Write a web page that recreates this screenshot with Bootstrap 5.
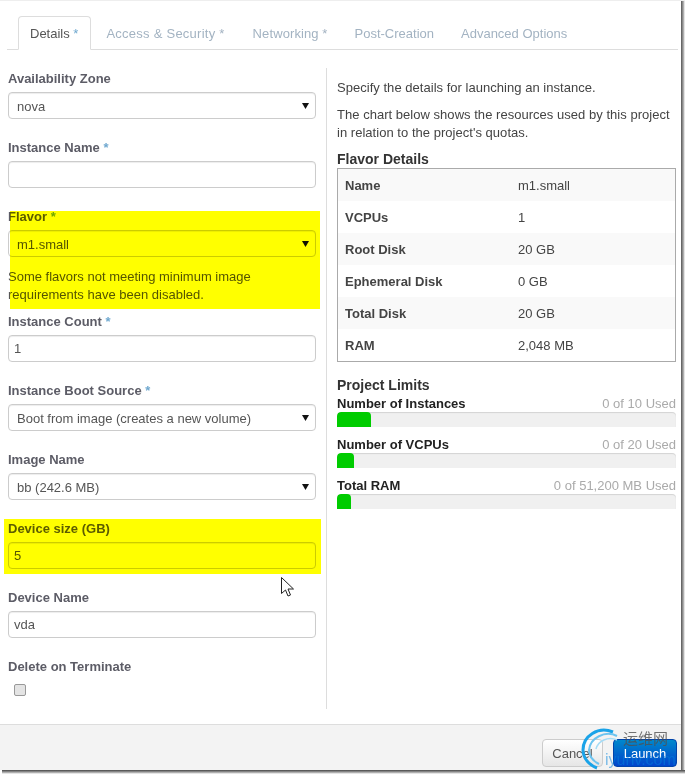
<!DOCTYPE html>
<html lang="en">
<head>
<meta charset="utf-8">
<title>Launch Instance</title>
<link href="https://cdn.jsdelivr.net/npm/bootstrap@5.3.0/dist/css/bootstrap.min.css" rel="stylesheet">
<style>
html,body{margin:0;height:774px;overflow:hidden;background:#fff}
body{font-family:"Liberation Sans",Arial,sans-serif;font-size:13px;color:#444;line-height:18px}
.shot{position:relative;width:685px;height:774px;overflow:hidden;border-top:1px solid #eee}
.dlg{width:681px;height:769px;display:flex;flex-direction:column;background:#fff}
.tabs-wrap{padding:15px 3px 0 7px}
.tabs-wrap .nav-tabs{border-bottom:1px solid #ddd;padding-left:11px;height:34px;flex-wrap:nowrap;--bs-nav-tabs-border-color:#ddd}
.tabs-wrap .nav-link{padding:7px 12px 0 11px;margin:0 2px 0 0;height:34px;font-size:13px;line-height:20px;color:#a3b3c2;border:1px solid transparent;border-radius:4px 4px 0 0;white-space:nowrap}
.tabs-wrap .nav-link.active{color:#555;background:#fff;border-color:#ddd #ddd #fff;margin-right:3px}
.tabs-wrap .tab-wide{letter-spacing:.25px;margin-right:3px}
.tab-mid{letter-spacing:.1px}
.ast{color:#6fa8cf}
.panes{display:flex;flex:1 1 auto;min-height:0;padding-top:18px}
.lhs{width:327px;flex:none;padding:1px 10px 0 8px;border-right:1px solid #ddd;height:641px}
.rhs{flex:1 1 auto;padding:11px 5px 0 10px;min-width:0}
.fld{height:69px;padding-top:1px}
.fld-lbl{display:block;margin:0;height:18px;line-height:18px;font-size:13px;font-weight:700;color:#5c5c66}
.fld .form-select,.fld .form-control{height:27px;margin-top:4px;font-size:13px;line-height:18px;color:#555;border:1px solid #ccc;border-radius:4px;padding:3px 8px;box-shadow:inset 0 1px 1px rgba(0,0,0,.075);font-family:inherit}
.fld .form-control{padding-left:5px}
.fld .form-select{padding-top:4px;padding-bottom:2px;background-image:url("data:image/svg+xml,%3Csvg xmlns='http://www.w3.org/2000/svg' width='7' height='6'%3E%3Cpath d='M0 0h7L3.500 6z' fill='%23111'/%3E%3C/svg%3E");background-size:7px 6px;background-position:right 6px center}
.flavor-fld{height:105px}
.hint{margin:11px 0 0;font-size:13px;line-height:18px;color:#555}
.fld .form-check-input{display:block;width:12px;height:12px;margin:8px 0 0 6px;float:none;background:#e4e4e4;border:1px solid #999;border-radius:2px}
.rhs p{margin:0 0 9px;line-height:18px;color:#444;letter-spacing:.03px}
.sect{font-size:14px;font-weight:700;line-height:16px;color:#333;margin:0}
.flv{margin:1px 0 0;width:339px;border:1px solid #aaa;border-collapse:separate;border-spacing:0;table-layout:fixed}
.flv td,.flv th{height:32px;padding:2px 0 0 7px;font-size:13px;color:#444;border:0;background:#fff;vertical-align:middle;line-height:18px}
.flv th{width:173px;font-weight:700}
.flv tr:nth-child(odd) td,.flv tr:nth-child(odd) th{background:#f9f9f9}
.sect.lim-h{margin:15px 0 2px}
.lim{height:41px}
.lim-top{display:flex;justify-content:space-between;height:17px;line-height:17px}
.lim-top b{color:#222;font-weight:700}
.lim-top span{color:#aaa}
.lim .progress{height:15px;width:339px;border-radius:4px 4px 0 0;background:#f0f0f0;box-shadow:inset 0 1px 1px rgba(0,0,0,.12)}
.lim .progress-bar{background:#00cc00;border-radius:4px 4px 0 0}
.foot{height:46px;flex:none;background:#f3f3f3;border-top:1px solid #ddd;margin-top:15px;display:flex;justify-content:flex-end;align-items:flex-start;gap:10px;padding:14px 4px 0 0}
.foot .btn{height:28px;font-size:13px;line-height:18px;padding:4px 0 2px;border-radius:4px}
.btn-cxl{width:61px;background:linear-gradient(#fff,#e6e6e6);border:1px solid #ccc;color:#555}
.btn-go{width:64px;background:linear-gradient(#0088cc,#0044cc);border:1px solid #0044aa;color:#fff}
.edge-r{position:absolute;left:681px;top:0;width:4px;height:774px;background:linear-gradient(90deg,#555,#aaa 60%,#fff)}
.edge-b{position:absolute;left:2px;top:769px;width:683px;height:4px;background:linear-gradient(#444,#aaa 60%,#fff)}
.hl{position:absolute;background:#ff0;mix-blend-mode:multiply}
.hl-a{left:10px;top:210px;width:310px;height:98px}
.hl-b{left:4px;top:518px;width:317px;height:55px}
.ptr{position:absolute;left:281px;top:576px;width:13px;height:21px}
.wm{position:absolute;left:581px;top:726px;width:99px;height:44px;pointer-events:none}
.wm-cn{position:absolute;left:42px;top:2px;font:400 15px/18px "Noto Sans CJK SC",sans-serif;color:rgba(80,80,80,.8)}
.wm-en{position:absolute;left:24px;top:24px;font:400 16px/18px "Liberation Sans",sans-serif;color:rgba(0,130,220,.5)}
.wm svg{position:absolute;left:0;top:0}
</style>
</head>
<body>
<div class="shot">
  <div class="dlg">
    <div class="tabs-wrap">
      <ul class="nav nav-tabs">
        <li class="nav-item"><a class="nav-link active" href="#">Details <span class="ast">*</span></a></li>
        <li class="nav-item"><a class="nav-link tab-wide" href="#">Access &amp; Security *</a></li>
        <li class="nav-item"><a class="nav-link tab-mid" href="#">Networking *</a></li>
        <li class="nav-item"><a class="nav-link" href="#">Post-Creation</a></li>
        <li class="nav-item"><a class="nav-link" href="#">Advanced Options</a></li>
      </ul>
    </div>
    <div class="panes">
      <div class="lhs">
        <div class="fld"><label class="fld-lbl">Availability Zone</label>
          <select class="form-select"><option>nova</option></select></div>
        <div class="fld"><label class="fld-lbl">Instance Name <span class="ast">*</span></label>
          <input class="form-control" type="text"></div>
        <div class="fld flavor-fld"><label class="fld-lbl">Flavor <span class="ast">*</span></label>
          <select class="form-select"><option>m1.small</option></select>
          <p class="hint">Some flavors not meeting minimum image requirements have been disabled.</p></div>
        <div class="fld"><label class="fld-lbl">Instance Count <span class="ast">*</span></label>
          <input class="form-control" type="text" value="1"></div>
        <div class="fld"><label class="fld-lbl">Instance Boot Source <span class="ast">*</span></label>
          <select class="form-select"><option>Boot from image (creates a new volume)</option></select></div>
        <div class="fld"><label class="fld-lbl">Image Name</label>
          <select class="form-select"><option>bb (242.6 MB)</option></select></div>
        <div class="fld"><label class="fld-lbl">Device size (GB)</label>
          <input class="form-control" type="text" value="5"></div>
        <div class="fld"><label class="fld-lbl">Device Name</label>
          <input class="form-control" type="text" value="vda"></div>
        <div class="fld"><label class="fld-lbl">Delete on Terminate</label>
          <input class="form-check-input" type="checkbox"></div>
      </div>
      <div class="rhs">
        <p>Specify the details for launching an instance.</p>
        <p>The chart below shows the resources used by this project in relation to the project's quotas.</p>
        <h6 class="sect">Flavor Details</h6>
        <table class="flv">
          <tr><th>Name</th><td>m1.small</td></tr>
          <tr><th>VCPUs</th><td>1</td></tr>
          <tr><th>Root Disk</th><td>20 GB</td></tr>
          <tr><th>Ephemeral Disk</th><td>0 GB</td></tr>
          <tr><th>Total Disk</th><td>20 GB</td></tr>
          <tr><th>RAM</th><td>2,048 MB</td></tr>
        </table>
        <h6 class="sect lim-h">Project Limits</h6>
        <div class="lim"><div class="lim-top"><b>Number of Instances</b><span>0 of 10 Used</span></div>
          <div class="progress"><div class="progress-bar" style="width:10%"></div></div></div>
        <div class="lim"><div class="lim-top"><b>Number of VCPUs</b><span>0 of 20 Used</span></div>
          <div class="progress"><div class="progress-bar" style="width:5%"></div></div></div>
        <div class="lim"><div class="lim-top"><b>Total RAM</b><span>0 of 51,200 MB Used</span></div>
          <div class="progress"><div class="progress-bar" style="width:4%"></div></div></div>
      </div>
    </div>
    <div class="foot">
      <button class="btn btn-cxl" type="button">Cancel</button>
      <button class="btn btn-go" type="button">Launch</button>
    </div>
  </div>
  <div class="hl hl-a"></div>
  <div class="hl hl-b"></div>
  <svg class="ptr" viewBox="0 0 13 21"><path d="M.5.5v16l4-3.500 2.500 6 2.500-1-2.500-6h5.500z" fill="#fff" stroke="#222" stroke-width="1"/></svg>
  <div class="wm">
    <svg width="42" height="44" viewBox="0 0 42 44"><path d="M32 5C17-1 2 9 2 23c0 8 6 15 14 18" fill="none" stroke="#1aa3e8" stroke-width="3"/><path d="M36 9C24 3 9 11 8 23c0 6 4 11 10 14" fill="none" stroke="#6cc4f0" stroke-width="2"/><path d="M36 13c-9-4-19 1-21 9" fill="none" stroke="#a5dcf6" stroke-width="1.500"/></svg>
    <div class="wm-cn">运维网</div>
    <div class="wm-en">iyunv.com</div>
  </div>
  <div class="edge-r"></div>
  <div class="edge-b"></div>
</div>
<script src="https://cdn.jsdelivr.net/npm/bootstrap@5.3.0/dist/js/bootstrap.bundle.min.js"></script>
</body>
</html>
